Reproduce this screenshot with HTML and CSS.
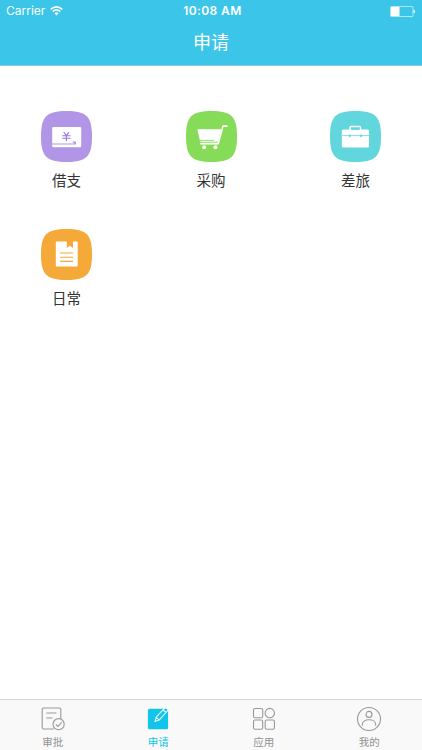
FILE: index.html
```html
<!DOCTYPE html>
<html lang="zh-CN">
<head>
<meta charset="utf-8">
<title>申请</title>
<link rel="stylesheet" href="styles.css">
</head>
<body>
<header class="header">
  <div class="status">
    <div class="carrier"><span>Carrier</span>
      <svg width="13" height="10" viewBox="0 0 13 10" fill="none" stroke="#fff" stroke-width="1.6"><path d="M.7 3.4Q6.5-1.7 12.3 3.4M2.7 5.6Q6.5 2.2 10.3 5.6"/><path d="M4.4 7.2Q6.5 5.5 8.6 7.2L6.5 9.5Z" fill="#fff" stroke="none"/></svg>
    </div>
    <div class="time">10:08 AM</div>
    <svg class="battery" width="26" height="11" viewBox="0 0 26 11"><rect x=".5" y=".5" width="22.5" height="10" rx=".8" fill="none" stroke="#fff" stroke-opacity=".6"/><rect x="1" y="1" width="8.5" height="9" fill="#fff"/><path d="M23.5 4H25v3h-1.5z" fill="#fff" fill-opacity=".8"/></svg>
  </div>
  <h1 class="title">申请</h1>
</header>
<main class="grid">
  <div class="item">
    <svg class="icon" viewBox="0 0 51 51"><path fill="#b195e7" d="M25.5 0C45.5 0 51 5.5 51 25.5S45.5 51 25.5 51 0 45.5 0 25.5 5.5 0 25.5 0Z"/><rect x="11.2" y="16" width="29" height="20.2" rx="1.2" fill="#fff"/><path d="M11.2 33H34.8M31.8 30.3l3 2.7" stroke="#b195e7" stroke-width="1.1" fill="none"/><path d="M32.5 30.5h2.3V33z" fill="#b195e7"/><path d="M22.7 21.2l2.7 3.4 2.7-3.4M21.2 24.7h8.4M21.2 27.3h8.4M25.4 24.5v5.8" fill="none" stroke="#9c78df" stroke-width="1.1"/></svg>
    <span>借支</span>
  </div>
  <div class="item">
    <svg class="icon" viewBox="0 0 51 51"><path fill="#86dc59" d="M25.5 0C45.5 0 51 5.5 51 25.5S45.5 51 25.5 51 0 45.5 0 25.5 5.5 0 25.5 0Z"/><path d="M11.3 18.2H35.5L32 30.8H15.2Q14.3 30.8 14 29.7Z" fill="#fff"/><path d="M41 15.1H37L32.2 32.6H14.8" fill="none" stroke="#fff" stroke-width="1.7" stroke-linecap="round" stroke-linejoin="round"/><path d="M14.2 29.4H28.2" stroke="#86dc59" stroke-width=".9"/><circle cx="18.2" cy="36.2" r="2" fill="#fff"/><circle cx="29.5" cy="36.2" r="2" fill="#fff"/></svg>
    <span>采购</span>
  </div>
  <div class="item">
    <svg class="icon" viewBox="0 0 51 51"><path fill="#61d6dd" d="M25.5 0C45.5 0 51 5.5 51 25.5S45.5 51 25.5 51 0 45.5 0 25.5 5.5 0 25.5 0Z"/><path d="M20 19v-2.4q0-1.2 1.2-1.2h8.2q1.2 0 1.2 1.2V19" fill="none" stroke="#fff" stroke-width="1.5"/><rect x="11.8" y="18.6" width="27.2" height="18" rx="1.5" fill="#fff"/><path d="M11.8 24.6H39M21.3 18.5h8" stroke="#61d6dd" stroke-width=".8"/><path d="M18.8 23.5h1.8v2l-.9 1-.9-1zM30.2 23.5H32v2l-.9 1-.9-1z" fill="#61d6dd"/></svg>
    <span>差旅</span>
  </div>
  <div class="item">
    <svg class="icon" viewBox="0 0 51 51"><path fill="#f4a938" d="M25.5 0C45.5 0 51 5.5 51 25.5S45.5 51 25.5 51 0 45.5 0 25.5 5.5 0 25.5 0Z"/><path d="M16 12.4H25.8V19L28.9 16.7 32 19V12.4H35.5Q36.7 12.4 36.7 13.6V36.3Q36.7 37.5 35.5 37.5H16Q14.8 37.5 14.8 36.3V13.6Q14.8 12.4 16 12.4Z" fill="#fff"/><path d="M19.2 24H32.2M19.2 28.2H32.2M19.2 32.4H32.2" stroke="#f4a938" stroke-width="1.1"/></svg>
    <span>日常</span>
  </div>
</main>
<nav class="tabs">
  <div class="tab">
    <svg viewBox="0 0 26 26" fill="none" stroke="#999" stroke-width="1.1"><path d="M20.8 13V3.2Q20.8 2 19.6 2H3.4Q2.2 2 2.2 3.2V21.8Q2.2 23 3.4 23H14M6.3 7H16.5M6.3 12H12.5"/><circle cx="18.6" cy="18.2" r="5.6"/><path d="M15.8 18.3l2.1 2.1 3.8-4"/></svg>
    <span>审批</span>
  </div>
  <div class="tab active">
    <svg viewBox="0 0 26 26"><rect x="2.9" y="2.8" width="20.2" height="20.4" rx="1.5" fill="#10c5e9"/><path d="M10 15.5L11.2 11.2 19.7 2.2Q20.9 1.4 22.2 2.6T22.4 5L14.1 14.1ZM11.2 11.2L14.1 14.1M18.2 3.9L21 6.5" fill="#10c5e9" stroke="#f2feff" stroke-width="1.1" stroke-linejoin="round"/></svg>
    <span>申请</span>
  </div>
  <div class="tab">
    <svg viewBox="0 0 26 26" fill="none" stroke="#999" stroke-width="1.1"><rect x="2.5" y="2.5" width="9.2" height="9.2" rx="1.5"/><circle cx="18.8" cy="7.1" r="4.7"/><rect x="2.5" y="14" width="9.2" height="9.2" rx="1.5"/><rect x="14.2" y="14" width="9.2" height="9.2" rx="1.5"/></svg>
    <span>应用</span>
  </div>
  <div class="tab">
    <svg viewBox="0 0 26 26" fill="none" stroke="#999" stroke-width="1.1"><circle cx="13" cy="13" r="11.5"/><circle cx="13" cy="8.4" r="3"/><path d="M6.3 19.8V18.6C6.3 15.8 9 13.8 13 13.8s6.7 2 6.7 4.8v1.2"/></svg>
    <span>我的</span>
  </div>
</nav>
</body>
</html>
```
FILE: styles.css
```css
* { box-sizing: border-box; }

body {
  margin: 0;
  height: 750px;
  display: flex;
  flex-direction: column;
  background: #fff;
  font-family: Inter, "Noto Sans CJK SC", sans-serif;
  overflow: hidden;
}

svg { display: block; }

.header {
  height: 66px;
  background: #3bc5e9;
  border-bottom: 1px solid #8ccfe1;
  color: #fff;
}

.status {
  height: 22px;
  padding: 0 6px 0 6px;
  display: grid;
  grid-template-columns: 1fr auto 1fr;
  align-items: center;
  font-size: 12px;
  line-height: 22px;
}

.carrier {
  display: flex;
  align-items: center;
  gap: 5px;
}

.time {
  font-weight: 600;
  letter-spacing: .4px;
  padding-left: 3px;
}

.battery { justify-self: end; }

.title {
  margin: 0;
  height: 43px;
  line-height: 42px;
  text-align: center;
  font-size: 18px;
  font-weight: 400;
}

.grid {
  flex: 1;
  display: grid;
  grid-template-columns: repeat(3, 51px);
  grid-auto-rows: 118px;
  justify-content: space-between;
  padding: 45px 41px 0;
  color: #333;
}

.item {
  display: flex;
  flex-direction: column;
  align-items: center;
  font-size: 14.5px;
  line-height: 22px;
}

.icon {
  width: 51px;
  height: 51px;
  margin-bottom: 8px;
}

.tabs {
  height: 51px;
  display: grid;
  grid-template-columns: repeat(4, 1fr);
  background: #f9f9f9;
  border-top: 1px solid #d5d5d5;
}

.tab {
  display: flex;
  flex-direction: column;
  align-items: center;
  padding-top: 6px;
  font-size: 10.5px;
  line-height: 16px;
  color: #929292;
}

.tab svg {
  width: 26px;
  height: 26px;
  margin-bottom: 3px;
}

.active { color: #10c5e9; }
```
